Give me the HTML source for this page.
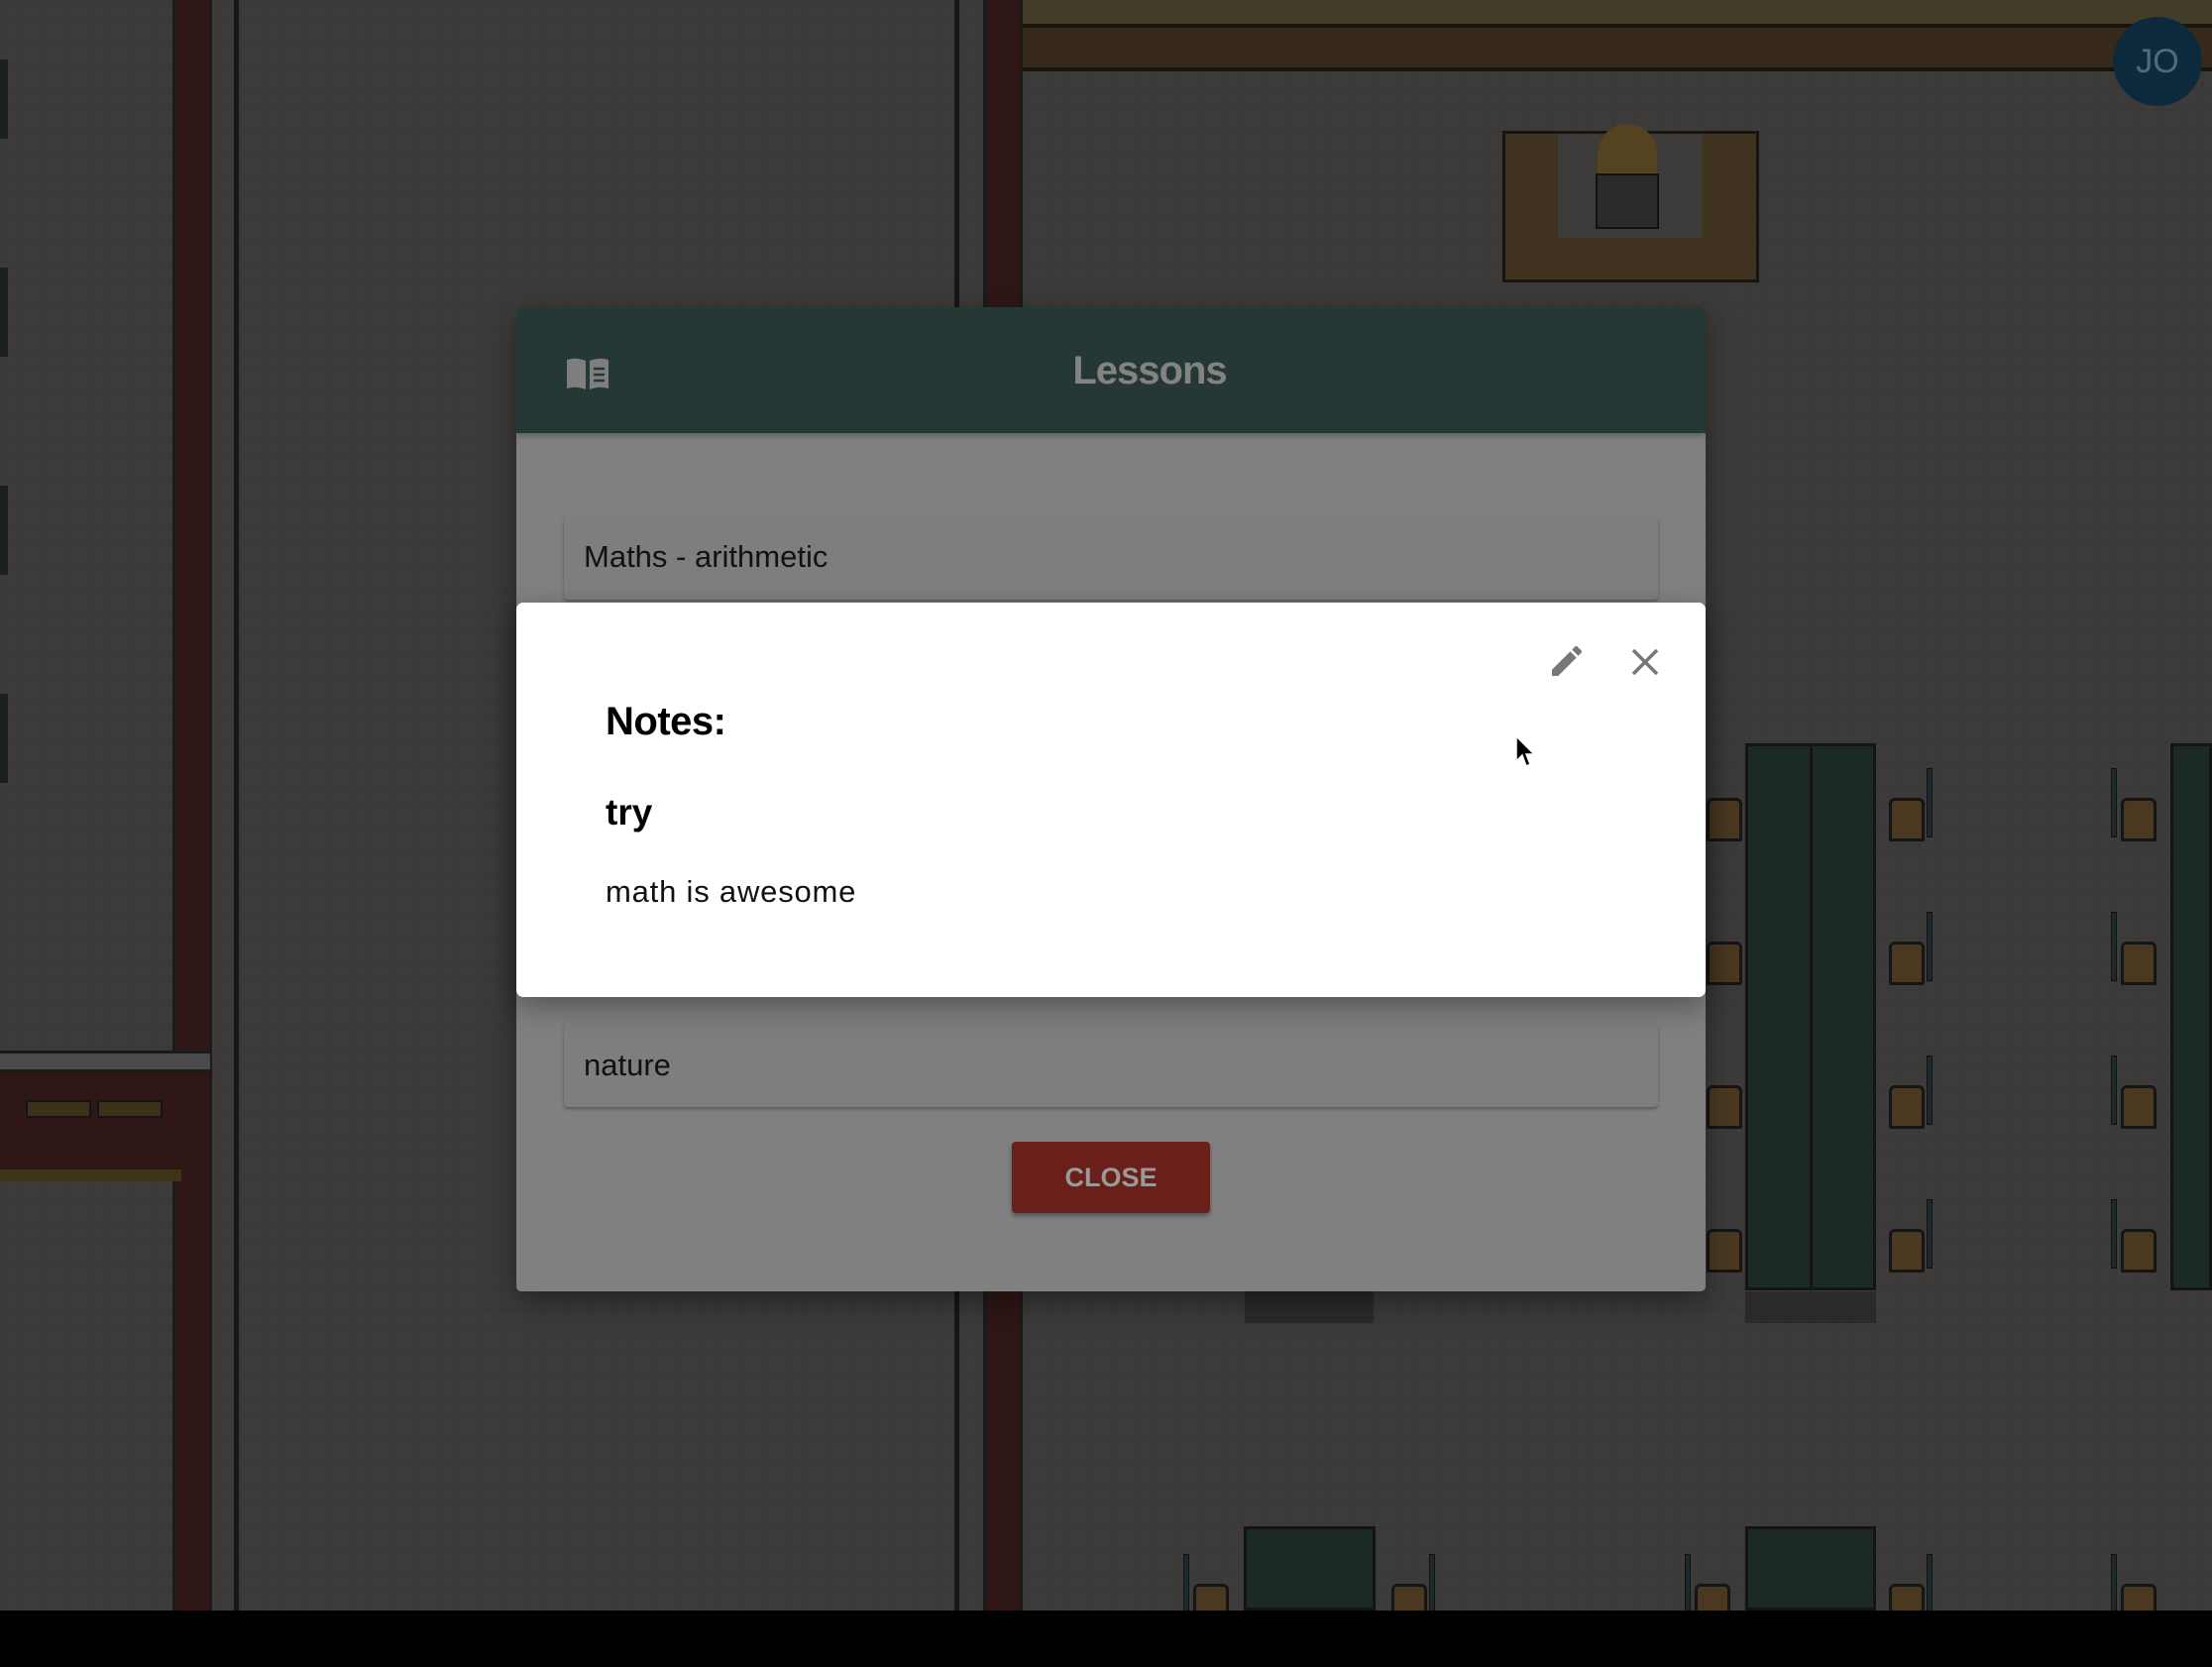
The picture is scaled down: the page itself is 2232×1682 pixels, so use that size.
<!DOCTYPE html>
<html><head><meta charset="utf-8"><style>
*{margin:0;padding:0;box-sizing:border-box}
body{width:2232px;height:1682px;overflow:hidden;background:#3c3b39;position:relative;font-family:"Liberation Sans",sans-serif}
.a{position:absolute}
.ch{position:absolute;width:36px;height:44px;background:#4a3920;border:3px solid #151515;border-radius:6px 6px 2px 2px}
.cb{position:absolute;width:6px;height:70px;background:#1c2a2e;border:1px solid #111}
</style></head><body>
<div class="a" style="left:0;top:0;width:2232px;height:1625px;background-image:linear-gradient(#363533 1px,transparent 1px),linear-gradient(90deg,#363533 1px,transparent 1px);background-size:22px 22px;opacity:.6"></div>
<div class="a" style="left:174px;top:0;width:40px;height:1625px;background:#2e1716;border-left:3px solid #1a1a1a;border-right:3px solid #1a1a1a"></div>
<div class="a" style="left:236px;top:0;width:5px;height:1625px;background:#161616"></div>
<div class="a" style="left:0;top:1060px;width:212px;height:22px;background:#4a4a4a;border-top:3px solid #1a1a1a;border-bottom:3px solid #1a1a1a"></div>
<div class="a" style="left:0;top:1082px;width:210px;height:98px;background:#2f1715"></div>
<div class="a" style="left:0;top:1180px;width:183px;height:12px;background:#3e3219"></div>
<div class="a" style="left:26px;top:1110px;width:66px;height:18px;background:#3a3118;border:2px solid #151515"></div>
<div class="a" style="left:98px;top:1110px;width:66px;height:18px;background:#3a3118;border:2px solid #151515"></div>
<div class="a" style="left:0;top:60px;width:8px;height:80px;background:#1a2020"></div>
<div class="a" style="left:0;top:270px;width:8px;height:90px;background:#1a2020"></div>
<div class="a" style="left:0;top:490px;width:8px;height:90px;background:#1a2020"></div>
<div class="a" style="left:0;top:700px;width:8px;height:90px;background:#1a2020"></div>
<div class="a" style="left:963px;top:0;width:5px;height:1625px;background:#161616"></div>
<div class="a" style="left:992px;top:0;width:40px;height:1625px;background:#2e1716;border-left:3px solid #1a1a1a;border-right:3px solid #1a1a1a"></div>
<div class="a" style="left:1032px;top:0;width:1200px;height:24px;background:#433d28"></div>
<div class="a" style="left:1032px;top:24px;width:1200px;height:48px;background:#372a1b;border-top:4px solid #181510;border-bottom:4px solid #181510"></div>
<div class="a" style="left:1516px;top:132px;width:259px;height:153px;background:#3f3320;border:3px solid #181510"></div>
<div class="a" style="left:1572px;top:135px;width:146px;height:105px;background:#3c3b39"></div>
<div class="a" style="left:1612px;top:125px;width:60px;height:60px;border-radius:30px 30px 6px 6px;background:#554220"></div>
<div class="a" style="left:1610px;top:175px;width:64px;height:56px;background:#2a2a2a;border:2px solid #111"></div>
<div class="a" style="left:1761px;top:750px;width:132px;height:552px;background:#1c2a24;border:3px solid #141414"></div>
<div class="a" style="left:1826px;top:750px;width:3px;height:552px;background:#141414"></div>
<div class="a" style="left:2190px;top:750px;width:42px;height:552px;background:#1c2a24;border:3px solid #141414"></div>
<div class="a" style="left:1255px;top:1540px;width:133px;height:85px;background:#1c2a24;border:3px solid #141414"></div>
<div class="a" style="left:1761px;top:1540px;width:132px;height:85px;background:#1c2a24;border:3px solid #141414"></div>
<div class="a" style="left:1256px;top:1303px;width:130px;height:32px;background:#2a2a2a"></div>
<div class="a" style="left:1761px;top:1303px;width:132px;height:32px;background:#2a2a2a"></div>
<div class="cb" style="left:1944px;top:775px"></div><div class="ch" style="left:1906px;top:805px"></div>
<div class="cb" style="left:1944px;top:920px"></div><div class="ch" style="left:1906px;top:950px"></div>
<div class="cb" style="left:1944px;top:1065px"></div><div class="ch" style="left:1906px;top:1095px"></div>
<div class="cb" style="left:1944px;top:1210px"></div><div class="ch" style="left:1906px;top:1240px"></div>
<div class="cb" style="left:2130px;top:775px"></div><div class="ch" style="left:2140px;top:805px"></div>
<div class="cb" style="left:2130px;top:920px"></div><div class="ch" style="left:2140px;top:950px"></div>
<div class="cb" style="left:2130px;top:1065px"></div><div class="ch" style="left:2140px;top:1095px"></div>
<div class="cb" style="left:2130px;top:1210px"></div><div class="ch" style="left:2140px;top:1240px"></div>
<div class="ch" style="left:1722px;top:805px"></div><div class="ch" style="left:1722px;top:950px"></div><div class="ch" style="left:1722px;top:1095px"></div><div class="ch" style="left:1722px;top:1240px"></div>
<div class="cb" style="left:1194px;top:1568px"></div><div class="ch" style="left:1204px;top:1598px"></div>
<div class="cb" style="left:1442px;top:1568px"></div><div class="ch" style="left:1404px;top:1598px"></div>
<div class="cb" style="left:1700px;top:1568px"></div><div class="ch" style="left:1710px;top:1598px"></div>
<div class="cb" style="left:1944px;top:1568px"></div><div class="ch" style="left:1906px;top:1598px"></div>
<div class="cb" style="left:2130px;top:1568px"></div><div class="ch" style="left:2140px;top:1598px"></div>
<div class="a" style="left:2132px;top:17px;width:90px;height:90px;border-radius:50%;background:#0d2a3d;color:#56697a;font-size:34px;line-height:90px;text-align:center">JO</div>
<div class="a" style="left:0;top:1625px;width:2232px;height:57px;background:#000"></div>

<div class="a" style="left:521px;top:310px;width:1200px;height:993px;background:#808080;border-radius:5px;overflow:hidden;box-shadow:0 10px 30px rgba(0,0,0,.4)">
  <div class="a" style="left:0;top:0;width:1200px;height:127px;background:#263835;box-shadow:0 3px 6px rgba(0,0,0,.25)"></div>
  <svg class="a" style="left:49px;top:50px" width="46" height="34" viewBox="0 0 46 34"><path d="M2 3 Q11 0 21 4 L21 33 Q11 29 2 32 Z" fill="#7e7e7e"/><path d="M25 4 Q35 0 44 3 L44 32 Q35 29 25 33 Z" fill="#7e7e7e"/><path d="M29 12h11M29 18h11M29 24h11" stroke="#263835" stroke-width="2.5"/></svg>
  <div class="a" style="left:0;top:40px;width:1278px;text-align:center;font-size:40px;font-weight:bold;color:#838383;line-height:48px;letter-spacing:-1px">Lessons</div>
  <div class="a" style="left:48px;top:210px;width:1104px;height:85px;background:#7e7e7e;border-radius:4px;box-shadow:0 2px 3px rgba(0,0,0,.3)"></div>
  <div class="a" style="left:68px;top:232px;font-size:31px;color:#111;line-height:40px">Maths - arithmetic</div>
  <div class="a" style="left:48px;top:722px;width:1104px;height:85px;background:#7e7e7e;border-radius:4px;box-shadow:0 2px 3px rgba(0,0,0,.3)"></div>
  <div class="a" style="left:68px;top:745px;font-size:31px;color:#111;line-height:40px">nature</div>
  <div class="a" style="left:500px;top:842px;width:200px;height:72px;background:#6a1f1b;border-radius:4px;box-shadow:0 3px 5px rgba(0,0,0,.35);color:#9a9a9a;font-size:27px;font-weight:bold;text-align:center;line-height:72px">CLOSE</div>
</div>

<div class="a" style="left:521px;top:608px;width:1200px;height:398px;background:#fff;border-radius:7px;box-shadow:0 10px 30px rgba(0,0,0,.35)">
  <svg class="a" style="left:1040px;top:39px" width="40" height="40" viewBox="0 0 24 24"><path d="M3 17.25V21h3.75L17.81 9.94l-3.75-3.75L3 17.25zM20.71 7.04a1 1 0 0 0 0-1.41l-2.34-2.34a1 1 0 0 0-1.41 0l-1.83 1.83 3.75 3.75 1.83-1.83z" fill="#777"/></svg>
  <svg class="a" style="left:1124px;top:45px" width="30" height="30" viewBox="0 0 30 30"><path d="M3 3L27 27M27 3L3 27" stroke="#777" stroke-width="3.5"/></svg>
  <div class="a" style="left:90px;top:96px;font-size:40px;font-weight:bold;color:#000;line-height:48px;letter-spacing:-.5px">Notes:</div>
  <div class="a" style="left:90px;top:190px;font-size:37px;font-weight:bold;color:#000;line-height:44px">try</div>
  <div class="a" style="left:90px;top:272px;font-size:31px;color:#111;line-height:40px;letter-spacing:.8px">math is awesome</div>
  <svg class="a" style="left:1008px;top:134px" width="22" height="34" viewBox="0 0 22 34"><path d="M1 1 L1 26 L7 20 L11 31 L15 29 L11 19 L19 19 Z" fill="#000" stroke="#fff" stroke-width="1.5"/></svg>
</div>
</body></html>
